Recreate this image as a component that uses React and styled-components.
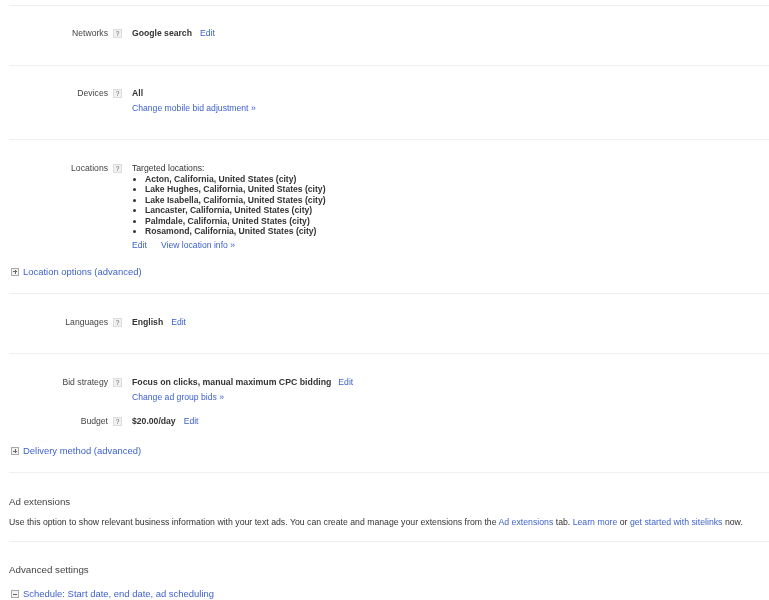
import React from 'react';
import styled, { createGlobalStyle } from 'styled-components';

const GlobalStyle = createGlobalStyle`
  html, body {
    margin: 0;
    padding: 0;
    background: #fff;
    overflow: hidden;
  }
  body {
    font-family: "Liberation Sans", Arial, sans-serif;
    font-size: 8.65px;
    line-height: 12px;
    color: #333;
  }
`;

const Page = styled.div`
  padding: 5px 0 0 9px;
  height: 595px;
  overflow: hidden;
  filter: blur(0.3px);
`;

const Section = styled.section`
  border-top: 1px solid #efefef;
  padding-top: ${({ top }) => top}px;
  height: ${({ height }) => height}px;
  box-sizing: border-box;
`;

const Row = styled.div`
  display: flex;
  align-items: flex-start;
  margin-bottom: ${({ gap }) => gap || 0}px;
`;

const Label = styled.div`
  width: 99px;
  text-align: right;
  color: #444;
  flex: none;
`;

const Help = styled.span`
  flex: none;
  width: 9px;
  height: 9px;
  margin: 2px 10px 0 5px;
  background: #f1f1f1;
  border: 1px solid #dcdcdc;
  box-sizing: border-box;
  color: #666;
  font-size: 6.5px;
  line-height: 8px;
  text-align: center;
`;

const Value = styled.div`
  min-width: 0;
`;

const Strong = styled.b`
  color: #333;
  font-weight: bold;
`;

const BidStrategyName = styled(Strong)`
  font-size: 8.76px;
`;

const Link = styled.a`
  color: #3f62cc;
  margin-left: ${({ left }) => left || 0}px;
`;

const BlockLink = styled(Link)`
  display: block;
  margin-top: ${({ top }) => top || 0}px;
`;

const LocationList = styled.ul`
  margin: -0.5px 0 0;
  padding: 0 0 0 13px;
  list-style: disc;
  font-size: 8.6px;
  font-weight: bold;
  line-height: 10.6px;
`;

const LocationActions = styled.div`
  margin-top: 1.5px;
`;

const Toggle = styled.div`
  display: flex;
  align-items: center;
  font-size: 9.45px;
  margin-top: ${({ top }) => top || 0}px;
`;

const ToggleBox = styled.span`
  position: relative;
  flex: none;
  width: 8px;
  height: 8px;
  margin: 0 4px 0 2px;
  background: #f2f2f2;
  border: 1px solid #aaa;
  box-sizing: border-box;

  &::before {
    content: '';
    position: absolute;
    left: 1px;
    right: 1px;
    top: 2.5px;
    height: 1px;
    background: #666;
  }

  &::after {
    content: '';
    display: ${({ open }) => (open ? 'none' : 'block')};
    position: absolute;
    top: 1px;
    bottom: 1px;
    left: 2.5px;
    width: 1px;
    background: #666;
  }
`;

const Heading = styled.h2`
  margin: 0 0 ${({ gap }) => gap || 0}px;
  font-size: 9.75px;
  line-height: 12px;
  font-weight: normal;
  color: #444;
`;

const Note = styled.p`
  margin: 0;
  font-size: 8.73px;
  white-space: nowrap;
`;

const locations = [
  'Acton, California, United States (city)',
  'Lake Hughes, California, United States (city)',
  'Lake Isabella, California, United States (city)',
  'Lancaster, California, United States (city)',
  'Palmdale, California, United States (city)',
  'Rosamond, California, United States (city)',
];

const App = () => (
  <Page>
    <GlobalStyle />
    <Section top={21} height={60}>
      <Row>
        <Label>Networks</Label>
        <Help>?</Help>
        <Value>
          <Strong>Google search</Strong>
          <Link left={8}>Edit</Link>
        </Value>
      </Row>
    </Section>
    <Section top={21} height={74}>
      <Row>
        <Label>Devices</Label>
        <Help>?</Help>
        <Value>
          <Strong>All</Strong>
          <BlockLink top={3}>Change mobile bid adjustment »</BlockLink>
        </Value>
      </Row>
    </Section>
    <Section top={22} height={154}>
      <Row>
        <Label>Locations</Label>
        <Help>?</Help>
        <Value>
          Targeted locations:
          <LocationList>
            {locations.map((name) => (
              <li key={name}>{name}</li>
            ))}
          </LocationList>
          <LocationActions>
            <Link>Edit</Link>
            <Link left={14}>View location info »</Link>
          </LocationActions>
        </Value>
      </Row>
      <Toggle top={15}>
        <ToggleBox />
        <Link>Location options (advanced)</Link>
      </Toggle>
    </Section>
    <Section top={22} height={60}>
      <Row>
        <Label>Languages</Label>
        <Help>?</Help>
        <Value>
          <Strong>English</Strong>
          <Link left={8}>Edit</Link>
        </Value>
      </Row>
    </Section>
    <Section top={22} height={119}>
      <Row gap={12}>
        <Label>Bid strategy</Label>
        <Help>?</Help>
        <Value>
          <BidStrategyName>Focus on clicks, manual maximum CPC bidding</BidStrategyName>
          <Link left={7}>Edit</Link>
          <BlockLink top={3}>Change ad group bids »</BlockLink>
        </Value>
      </Row>
      <Row>
        <Label>Budget</Label>
        <Help>?</Help>
        <Value>
          <Strong>$20.00/day</Strong>
          <Link left={8}>Edit</Link>
        </Value>
      </Row>
      <Toggle top={18}>
        <ToggleBox />
        <Link>Delivery method (advanced)</Link>
      </Toggle>
    </Section>
    <Section top={23} height={69}>
      <Heading gap={8}>Ad extensions</Heading>
      <Note>
        Use this option to show relevant business information with your text ads. You can create and
        manage your extensions from the <Link>Ad extensions</Link> tab. <Link>Learn more</Link> or{' '}
        <Link>get started with sitelinks</Link> now.
      </Note>
    </Section>
    <Section top={22}>
      <Heading>Advanced settings</Heading>
      <Toggle top={12}>
        <ToggleBox open />
        <Link>Schedule: Start date, end date, ad scheduling</Link>
      </Toggle>
    </Section>
  </Page>
);

export default App;
